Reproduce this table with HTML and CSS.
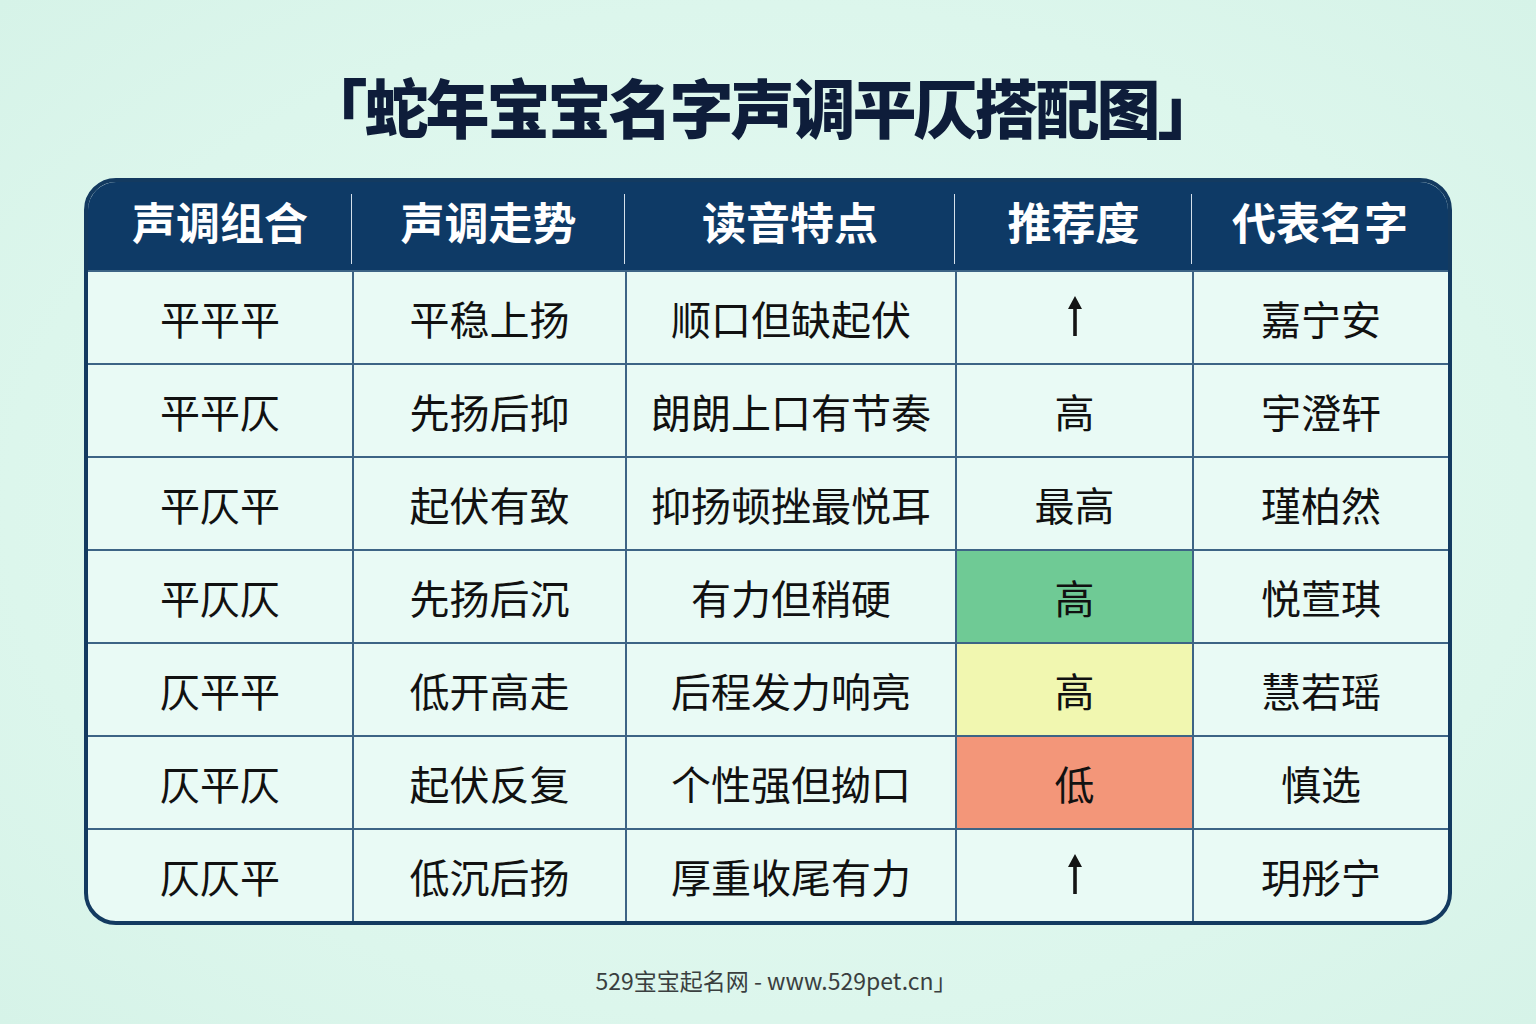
FILE: index.html
```html
<!DOCTYPE html>
<html lang="zh-CN">
<head>
<meta charset="utf-8">
<title>蛇年宝宝名字声调平仄搭配图</title>
<link rel="stylesheet" href="styles.css">
</head>
<body>
<main class="page">
  <h1 class="title">「蛇年宝宝名字声调平仄搭配图」</h1>
  <div class="table">
    <div class="hcell">声调组合</div>
    <div class="hcell">声调走势</div>
    <div class="hcell">读音特点</div>
    <div class="hcell">推荐度</div>
    <div class="hcell last">代表名字</div>

    <div class="cell">平平平</div>
    <div class="cell">平稳上扬</div>
    <div class="cell">顺口但缺起伏</div>
    <div class="cell"><svg class="arrow" width="18" height="42" viewBox="0 0 18 42"><path d="M9 1 L16 14 L10.8 14 L10.8 41 L7.2 41 L7.2 14 L2 14 Z" fill="#141414"/></svg></div>
    <div class="cell">嘉宁安</div>

    <div class="cell">平平仄</div>
    <div class="cell">先扬后抑</div>
    <div class="cell">朗朗上口有节奏</div>
    <div class="cell">高</div>
    <div class="cell">宇澄轩</div>

    <div class="cell">平仄平</div>
    <div class="cell">起伏有致</div>
    <div class="cell">抑扬顿挫最悦耳</div>
    <div class="cell">最高</div>
    <div class="cell">瑾柏然</div>

    <div class="cell">平仄仄</div>
    <div class="cell">先扬后沉</div>
    <div class="cell">有力但稍硬</div>
    <div class="cell green">高</div>
    <div class="cell">悦萱琪</div>

    <div class="cell">仄平平</div>
    <div class="cell">低开高走</div>
    <div class="cell">后程发力响亮</div>
    <div class="cell yellow">高</div>
    <div class="cell">慧若瑶</div>

    <div class="cell">仄平仄</div>
    <div class="cell">起伏反复</div>
    <div class="cell">个性强但拗口</div>
    <div class="cell red">低</div>
    <div class="cell">慎选</div>

    <div class="cell">仄仄平</div>
    <div class="cell">低沉后扬</div>
    <div class="cell">厚重收尾有力</div>
    <div class="cell"><svg class="arrow" width="18" height="42" viewBox="0 0 18 42"><path d="M9 1 L16 14 L10.8 14 L10.8 41 L7.2 41 L7.2 14 L2 14 Z" fill="#141414"/></svg></div>
    <div class="cell">玥彤宁</div>
  </div>
  <p class="footer">529宝宝起名网 - www.529pet.cn」</p>
</main>
</body>
</html>
```

FILE: styles.css
```css
html, body {
  margin: 0;
  padding: 0;
}
body {
  width: 1536px;
  height: 1024px;
  overflow: hidden;
  background: radial-gradient(ellipse at 50% 50%, #e6faf3 0%, #dcf6ec 70%, #d6f3e8 100%);
  font-family: "Noto Sans CJK SC", "Noto Sans", sans-serif;
  color: #141414;
}
.page {
  display: flex;
  flex-direction: column;
  align-items: center;
  padding-top: 69px;
}
.title {
  margin: 0;
  font-size: 64px;
  line-height: 72px;
  font-weight: 900;
  color: #0e1d3a;
  letter-spacing: -3px;
  margin-right: 14px;
}
.table {
  margin-top: 37px;
  width: 1368px;
  box-sizing: border-box;
  border: 4px solid #133a60;
  border-radius: 32px;
  overflow: hidden;
  display: grid;
  grid-template-columns: 264px 273px 330px 237px 256px;
  grid-template-rows: 88px repeat(7, 93px);
  background: #e9faf5;
}
.hcell {
  background: #0e3a66;
  color: #ffffff;
  font-size: 44px;
  font-weight: 700;
  display: flex;
  align-items: center;
  justify-content: center;
  position: relative;
  padding-bottom: 10px;
}
.hcell::after {
  content: "";
  position: absolute;
  right: -1px;
  top: 12px;
  bottom: 6px;
  width: 2px;
  background: #d4e0ea;
}
.hcell.last::after {
  display: none;
}
.cell {
  display: flex;
  align-items: center;
  justify-content: center;
  font-size: 40px;
  font-weight: 400;
  color: #111;
  border-top: 2px solid #3d6485;
  border-left: 2px solid #3d6485;
  box-sizing: border-box;
}
.cell:nth-child(5n+1) {
  border-left: none;
}
.arrow {
  display: block;
  margin-top: -4px;
}
.cell.green {
  background: #6fca95;
}
.cell.yellow {
  background: #f1f7b0;
}
.cell.red {
  background: #f39679;
}
.footer {
  margin: 38px 0 0 16px;
  font-size: 23px;
  color: #3a3f3f;
  letter-spacing: 0;
}
```
